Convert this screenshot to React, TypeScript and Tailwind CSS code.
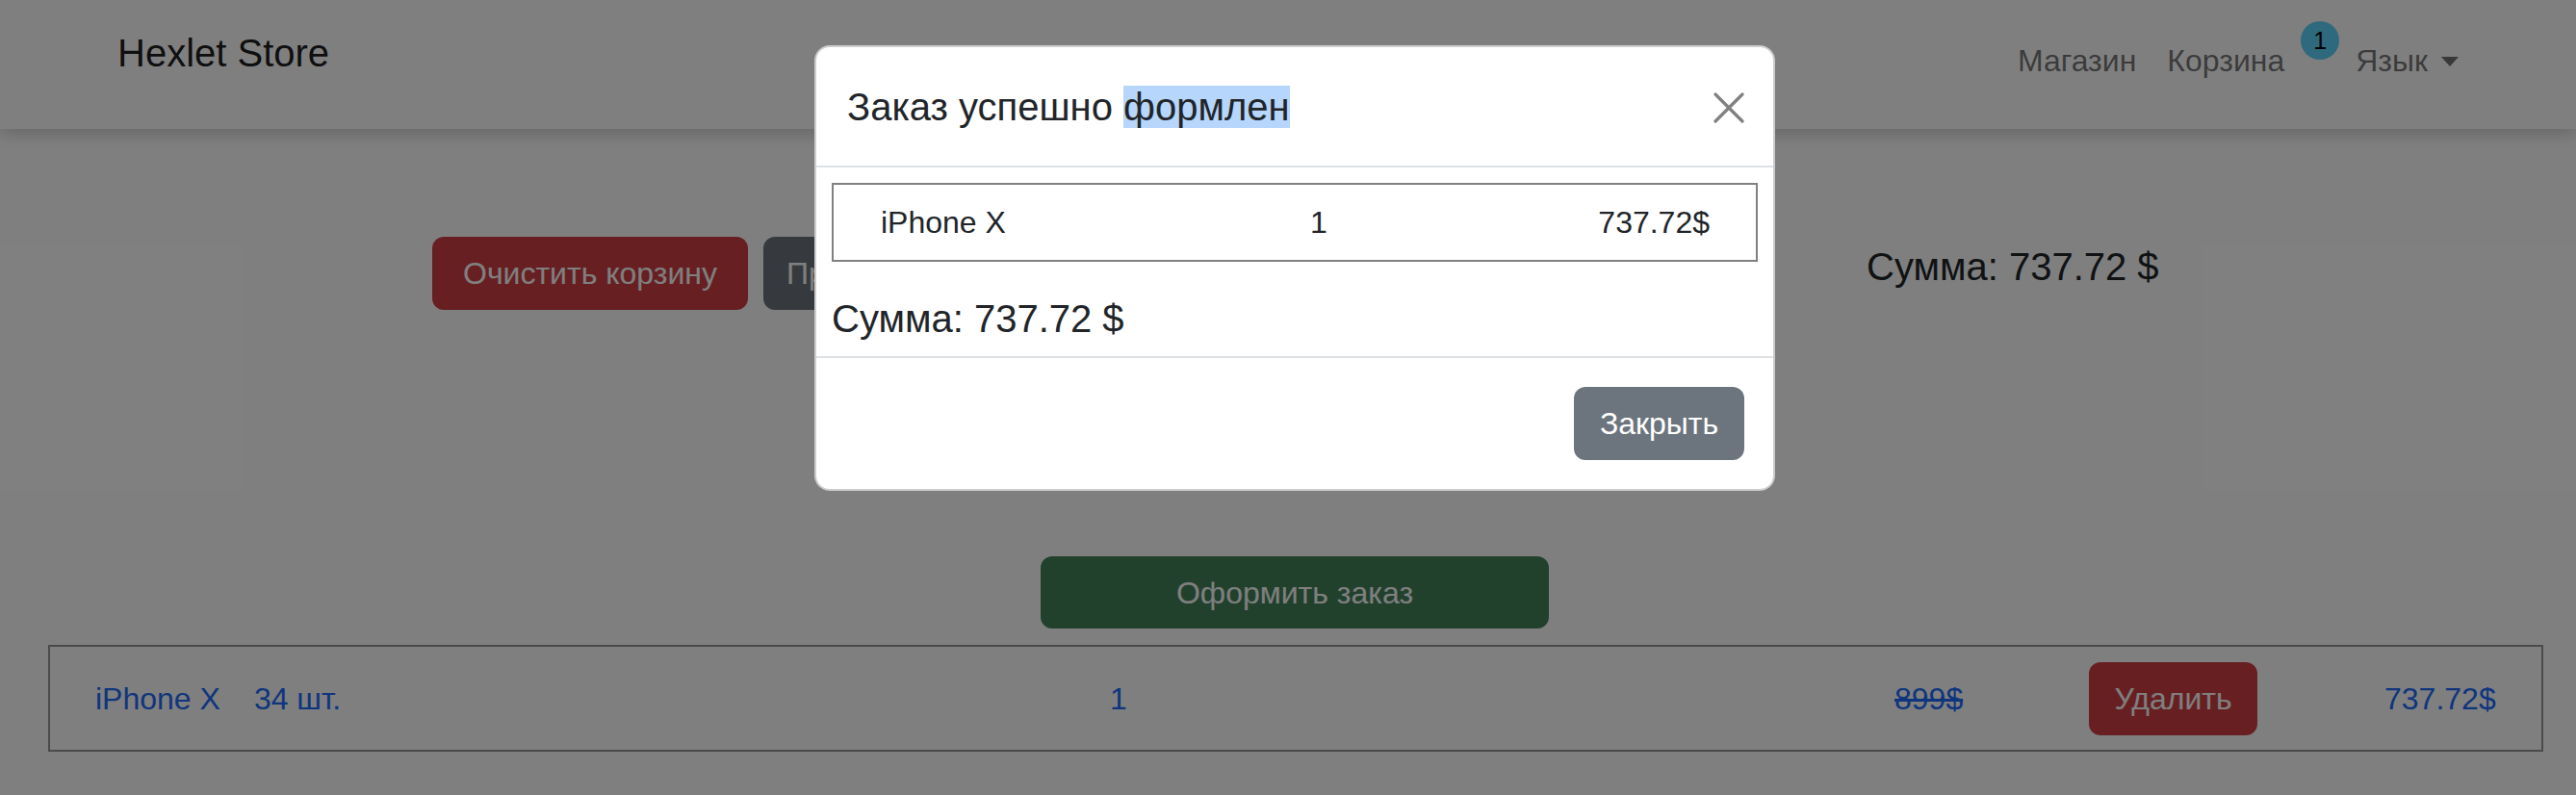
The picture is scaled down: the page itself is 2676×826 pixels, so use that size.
import React from "react";

const font = { fontFamily: '"Liberation Sans", Arial, sans-serif' };

const Navbar = () => (
  <header className="relative z-0 flex h-[134px] items-start bg-white px-[122px] shadow-[0_6px_16px_rgba(0,0,0,0.18)]">
    <div className="mt-[25px] text-[40px] leading-[60px] text-black/90">Hexlet Store</div>
    <nav className="ml-auto flex items-start text-[32px] leading-[48px] text-black/55">
      <a className="mt-[39px]">Магазин</a>
      <a className="ml-[32px] mt-[39px]">Корзина</a>
      <span className="ml-[17px] mt-[22px] flex h-[40px] w-[40px] items-center justify-center rounded-full bg-[#5cd3fb] text-[25px] leading-none text-black">
        1
      </span>
      <a className="ml-[17px] mt-[39px] flex items-center">
        Язык
        <span className="ml-[14px] mt-[2px] h-0 w-0 border-x-[9px] border-t-[10px] border-x-transparent border-t-black/55" />
      </a>
    </nav>
  </header>
);

const Cart = () => (
  <main className="text-[32px] leading-[48px]">
    <div className="mt-[112px] grid grid-cols-[1490px_auto] pl-[449px]">
      <div className="flex gap-[16px]">
        <button className="h-[76px] w-[328px] rounded-[12px] bg-[#cf3f45] text-white">Очистить корзину</button>
        <button className="h-[76px] rounded-[12px] bg-[#6c757d] px-[24px] text-white">Продолжить покупки</button>
      </div>
      <div className="mt-[1px] text-[40px] leading-[60px] text-[#212529]">Сумма: 737.72 $</div>
    </div>

    <div className="mt-[256px] flex justify-center pl-[14px]">
      <button className="h-[75px] w-[528px] rounded-[12px] bg-[#42835b] text-white">Оформить заказ</button>
    </div>

    <div className="ml-[50px] mt-[17px] grid h-[111px] w-[2592px] grid-cols-[1101px_815px_202px_307px_1fr] items-center border-2 border-[#949494] text-[#1d6afa]">
      <div className="flex pl-[47px]">
        <a>iPhone X</a>
        <span className="ml-[35px]">34 шт.</span>
      </div>
      <div>1</div>
      <div className="line-through">899$</div>
      <div>
        <button className="h-[76px] w-[175px] rounded-[12px] bg-[#cf3f45] text-white">Удалить</button>
      </div>
      <div>737.72$</div>
    </div>
  </main>
);

const CloseIcon = () => (
  <svg width="32" height="32" viewBox="0 0 32 32" fill="none">
    <path d="M2 2L30 30M30 2L2 30" stroke="#808080" strokeWidth="3.2" strokeLinecap="round" />
  </svg>
);

const OrderModal = () => (
  <div className="absolute left-[846px] top-[47px] z-20 w-[998px] rounded-[16px] border-2 border-black/20 bg-white text-[#212529]">
    <div className="flex h-[125px] items-center justify-between border-b-2 border-[#dee2e6] pl-[32px] pr-[30px]">
      <h5 className="text-[40px] leading-[60px]">
        Заказ успешно <span className="bg-[#b6d6fc]">формлен</span>
      </h5>
      <button className="mt-[2px]">
        <CloseIcon />
      </button>
    </div>
    <div className="px-[16px] pt-[16px] pb-[9px]">
      <div className="grid h-[82px] grid-cols-[495px_1fr_auto] items-center border-2 border-[#808080] text-[32px] leading-[48px]">
        <div className="pl-[49px]">iPhone X</div>
        <div>1</div>
        <div className="pr-[48px]">737.72$</div>
      </div>
      <div className="mt-[29px] text-[40px] leading-[60px]">Сумма: 737.72 $</div>
    </div>
    <div className="flex h-[138px] items-center justify-end border-t-2 border-[#dee2e6] pr-[30px]">
      <button className="h-[76px] w-[177px] rounded-[12px] bg-[#6c757d] text-[32px] leading-[48px] text-white">
        Закрыть
      </button>
    </div>
  </div>
);

export default function App() {
  return (
    <div className="relative h-[826px] w-[2676px] overflow-hidden bg-white" style={font}>
      <Navbar />
      <Cart />
      <div className="absolute inset-0 z-10 bg-black/50" />
      <OrderModal />
    </div>
  );
}
